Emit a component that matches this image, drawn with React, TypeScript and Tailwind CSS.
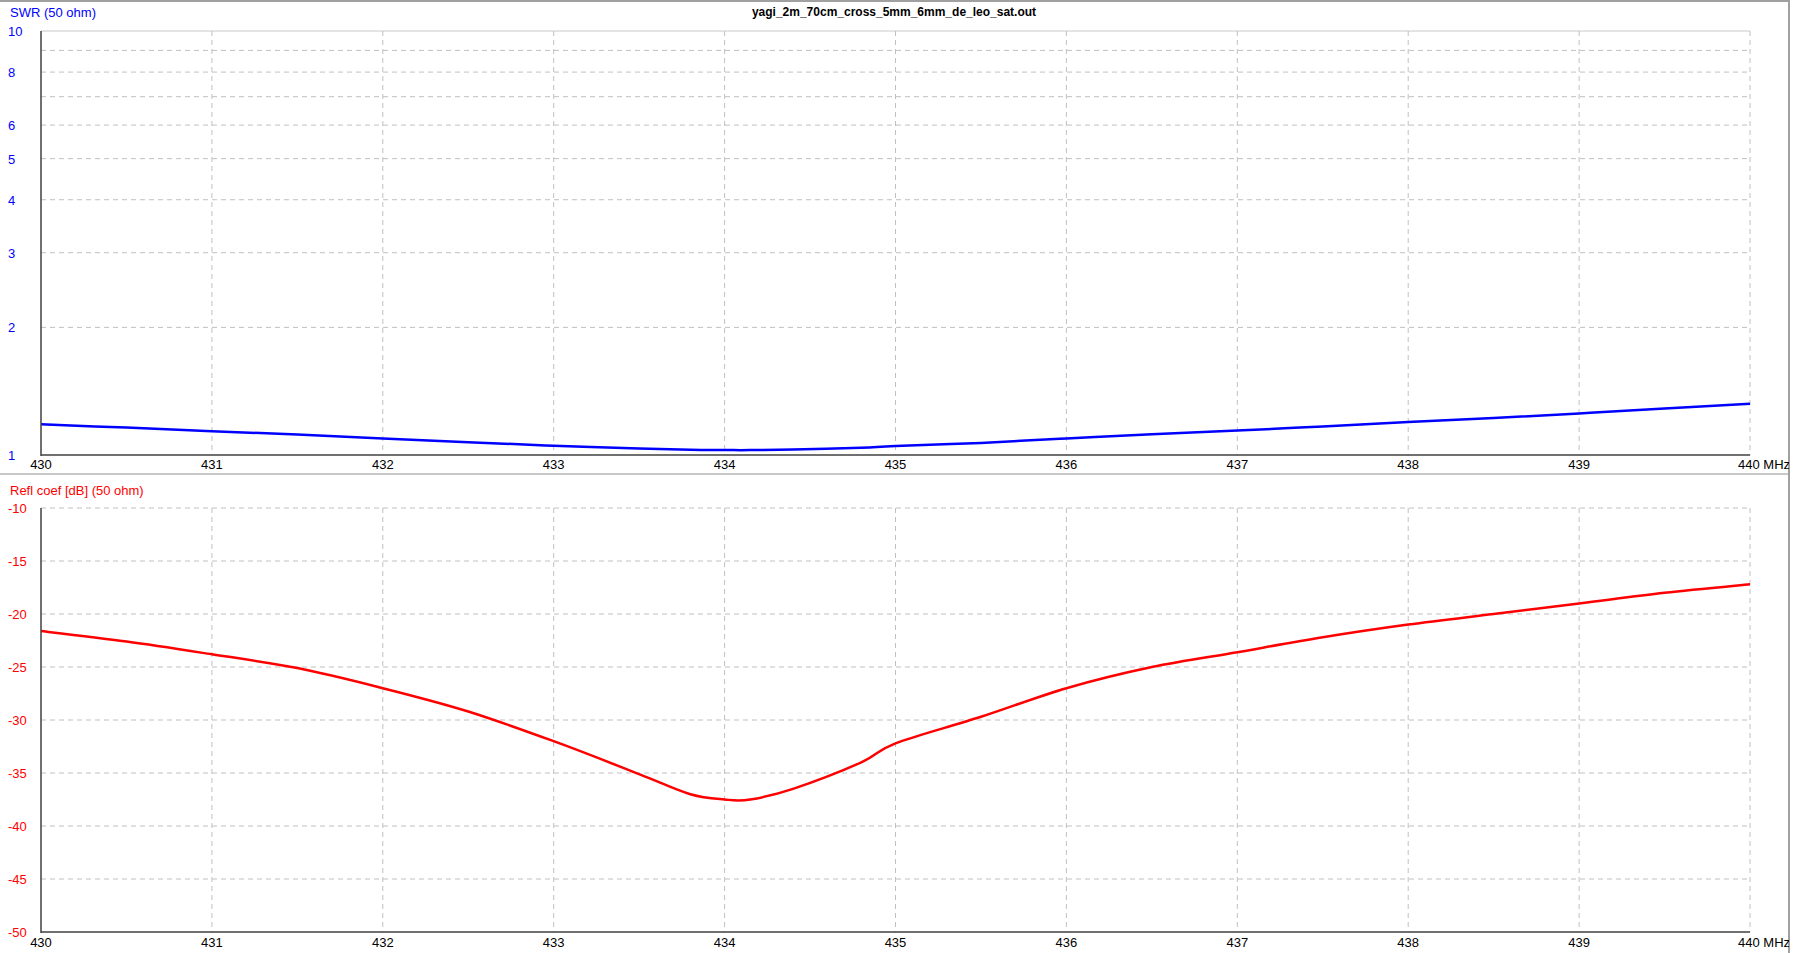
import React from "react";

const X0 = 41, X1 = 1750;
const pts: [number, number][] = [
  [430, -21.6], [430.5, -22.6], [431, -23.8], [431.5, -25.1], [432, -27], [432.5, -29.2], [433, -32],
  [433.5, -35.1], [433.8, -37], [434.0, -37.5], [434.15, -37.5], [434.4, -36.5], [434.8, -34],
  [435, -32.2], [435.5, -29.7], [436, -27], [436.5, -25], [437, -23.6], [437.5, -22.2],
  [438, -21], [438.5, -20], [439, -19], [439.5, -18], [440, -17.2],
];
const fx = (f: number) => X0 + ((f - 430) / 10) * (X1 - X0);
const freqs = [430, 431, 432, 433, 434, 435, 436, 437, 438, 439, 440];
const font = "'Liberation Sans', Arial, sans-serif";

function smooth(p: [number, number][]) {
  let d = `M${p[0][0].toFixed(1)},${p[0][1].toFixed(1)}`;
  for (let i = 0; i < p.length - 1; i++) {
    const a = p[Math.max(0, i - 1)], b = p[i], c = p[i + 1], e = p[Math.min(p.length - 1, i + 2)];
    const c1x = b[0] + (c[0] - a[0]) / 6, c1y = b[1] + (c[1] - a[1]) / 6;
    const c2x = c[0] - (e[0] - b[0]) / 6, c2y = c[1] - (e[1] - b[1]) / 6;
    d += ` C${c1x.toFixed(1)},${c1y.toFixed(1)} ${c2x.toFixed(1)},${c2y.toFixed(1)} ${c[0].toFixed(1)},${c[1].toFixed(1)}`;
  }
  return d;
}

function XAxis({ y }: { y: number }) {
  return (
    <>
      {freqs.map((f) =>
        f === 440 ? (
          <text key={f} x={fx(f) - 12} y={y} fontSize={13} fill="#000" fontFamily={font}>440 MHz</text>
        ) : (
          <text key={f} x={fx(f)} y={y} fontSize={13} fill="#000" textAnchor="middle" fontFamily={font}>{f}</text>
        )
      )}
    </>
  );
}

function SwrPanel() {
  const Y0 = 29, Y1 = 453;
  const sy = (s: number) => Y1 - Math.log10(s) * (Y1 - Y0);
  const d = smooth(
    pts.map(([f, db]) => {
      const g = Math.pow(10, db / 20);
      const s = (1 + g) / (1 - g);
      return [fx(f), sy(s)] as [number, number];
    })
  );
  const labels = [10, 8, 6, 5, 4, 3, 2, 1];
  return (
    <svg width={1789} height={471} className="block">
      <text x={894} y={14} fontSize={12} fontWeight="bold" textAnchor="middle" fontFamily={font}>yagi_2m_70cm_cross_5mm_6mm_de_leo_sat.out</text>
      <text x={10} y={15} fontSize={13} fill="#0000ff" fontFamily={font}>SWR (50 ohm)</text>
      <line x1={X0} y1={Y0} x2={X1} y2={Y0} stroke="#c8c8c8" />
      {[2, 3, 4, 5, 6, 7, 8, 9].map((s) => (
        <line key={s} x1={X0} x2={X1} y1={sy(s)} y2={sy(s)} stroke="#c0c0c0" strokeDasharray="5 4" />
      ))}
      {freqs.slice(1).map((f) => (
        <line key={f} x1={fx(f)} x2={fx(f)} y1={Y0} y2={Y1} stroke="#c0c0c0" strokeDasharray="5 4" />
      ))}
      {labels.map((s) => (
        <text key={s} x={8} y={sy(s) + 5} fontSize={13} fill="#0000ff" fontFamily={font}>{s}</text>
      ))}
      <path d={d} fill="none" stroke="#0000ff" strokeWidth={2.5} />
      <line x1={X0} y1={Y0} x2={X0} y2={Y1 + 1} stroke="#404040" strokeWidth={1.5} />
      <line x1={X0} y1={Y1} x2={X1} y2={Y1} stroke="#404040" strokeWidth={1.5} />
      <XAxis y={467} />
    </svg>
  );
}

function ReflPanel() {
  const Y0 = 33, Y1 = 457;
  const sy = (db: number) => Y0 + ((-10 - db) / 40) * (Y1 - Y0);
  const d = smooth(pts.map(([f, db]) => [fx(f), sy(db)] as [number, number]));
  const ticks = [-10, -15, -20, -25, -30, -35, -40, -45, -50];
  return (
    <svg width={1789} height={478} className="block">
      <text x={10} y={20} fontSize={13} fill="#ff0000" fontFamily={font}>Refl coef [dB] (50 ohm)</text>
      {ticks.slice(0, -1).map((t) => (
        <line key={t} x1={X0} x2={X1} y1={sy(t)} y2={sy(t)} stroke="#c0c0c0" strokeDasharray="5 4" />
      ))}
      {freqs.slice(1).map((f) => (
        <line key={f} x1={fx(f)} x2={fx(f)} y1={Y0} y2={Y1} stroke="#c0c0c0" strokeDasharray="5 4" />
      ))}
      {ticks.map((t) => (
        <text key={t} x={8} y={sy(t) + 5} fontSize={13} fill="#ff0000" fontFamily={font}>{t}</text>
      ))}
      <path d={d} fill="none" stroke="#ff0000" strokeWidth={2.5} strokeLinejoin="round" />
      <line x1={X0} y1={Y0} x2={X0} y2={Y1 + 1} stroke="#404040" strokeWidth={1.5} />
      <line x1={X0} y1={Y1} x2={X1} y2={Y1} stroke="#404040" strokeWidth={1.5} />
      <XAxis y={472} />
    </svg>
  );
}

export default function App() {
  return (
    <div className="w-[1793px] h-[953px] bg-white overflow-hidden">
      <div className="w-[1790px] h-[953px] border-t-2 border-r-2 border-[#a0a0a0] flex flex-col">
        <SwrPanel />
        <div className="h-[2px] bg-[#c8c8c8]" />
        <ReflPanel />
      </div>
    </div>
  );
}
